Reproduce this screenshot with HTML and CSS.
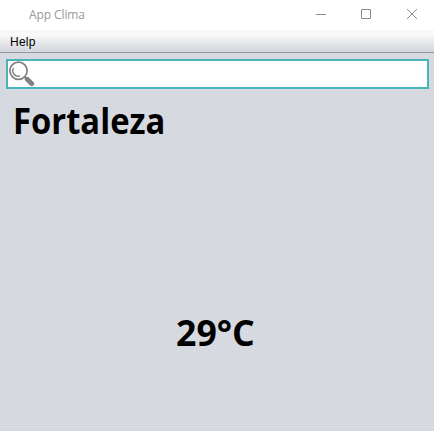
FILE: index.html
```html
<!DOCTYPE html>
<html lang="pt">
<head>
<meta charset="utf-8">
<title>App Clima</title>
<link rel="stylesheet" href="styles.css">
</head>
<body>
<header class="titlebar">
  <span class="title">App Clima</span>
  <div class="controls">
    <svg width="12" height="12" viewBox="0 0 12 12"><path d="M1 5.500h10"/></svg>
    <svg width="12" height="12" viewBox="0 0 12 12"><path d="M1.500 .5h9v9h-9z"/></svg>
    <svg width="12" height="12" viewBox="0 0 12 12"><path d="M1 0l10 10M11 0L1 10"/></svg>
  </div>
</header>
<nav class="menubar"><span class="menu">Help</span></nav>
<main class="content">
  <div class="search">
    <svg width="27" height="26" viewBox="0 0 27 26"><circle class="lens" cx="10.500" cy="9.800" r="8.600"/><path class="glint" d="M5.500 7a5.500 5.500 0 0 0 6.500 8"/><path class="neck" d="M16.500 15.800l2 2"/><path class="handle" d="M19.200 18.300l4.600 4.400"/></svg>
  </div>
  <h1 class="city">Fortaleza</h1>
  <p class="temp">29°C</p>
</main>
</body>
</html>
```
FILE: styles.css
```css
* { box-sizing: border-box; }
body { margin: 0; width: 434px; height: 431px; overflow: hidden; display: flex; flex-direction: column; background: #d6d9df; font-family: "Open Sans", sans-serif; }
.titlebar { height: 30px; background: #fff; display: flex; justify-content: space-between; padding: 0 16px 0 29px; align-items: center; }
.title { font-size: 12px; line-height: 16px; margin-bottom: 1px; letter-spacing: -0.1px; color: #999; }
.controls { display: flex; gap: 34px; }
.controls svg { fill: none; stroke: #8c8c8c; stroke-width: 1; }
.controls svg:first-child { margin-right: -1px; }
.menubar { height: 23px; background: linear-gradient(#f7f7f7, #fafafa 20%, #d6d9df 90%); border-bottom: 1px solid #9297a1; padding: 3px 10px; font-family: "Liberation Sans", sans-serif; font-size: 12px; line-height: 18px; letter-spacing: 0.25px; }
.content { flex: 1; display: flex; flex-direction: column; padding: 6px 5px 0 6px; }
.search { height: 30px; border: 2px solid #48b5bb; background: #fff; }
.search svg { display: block; fill: none; }
.lens { stroke: #808080; stroke-width: 1.8; }
.glint { stroke: #808080; stroke-width: 1.4; }
.neck { stroke: #808080; stroke-width: 2.2; }
.handle { stroke: #808080; stroke-width: 4.8; stroke-linecap: round; }
.city { margin: 7px 0 0 7px; font-size: 36px; line-height: 50px; font-weight: 700; transform: scaleX(0.91); transform-origin: 0 0; }
.temp { margin: 162px 0 0 170px; font-size: 36px; line-height: 50px; font-weight: 700; transform: scaleX(0.99); transform-origin: 0 0; }
```
